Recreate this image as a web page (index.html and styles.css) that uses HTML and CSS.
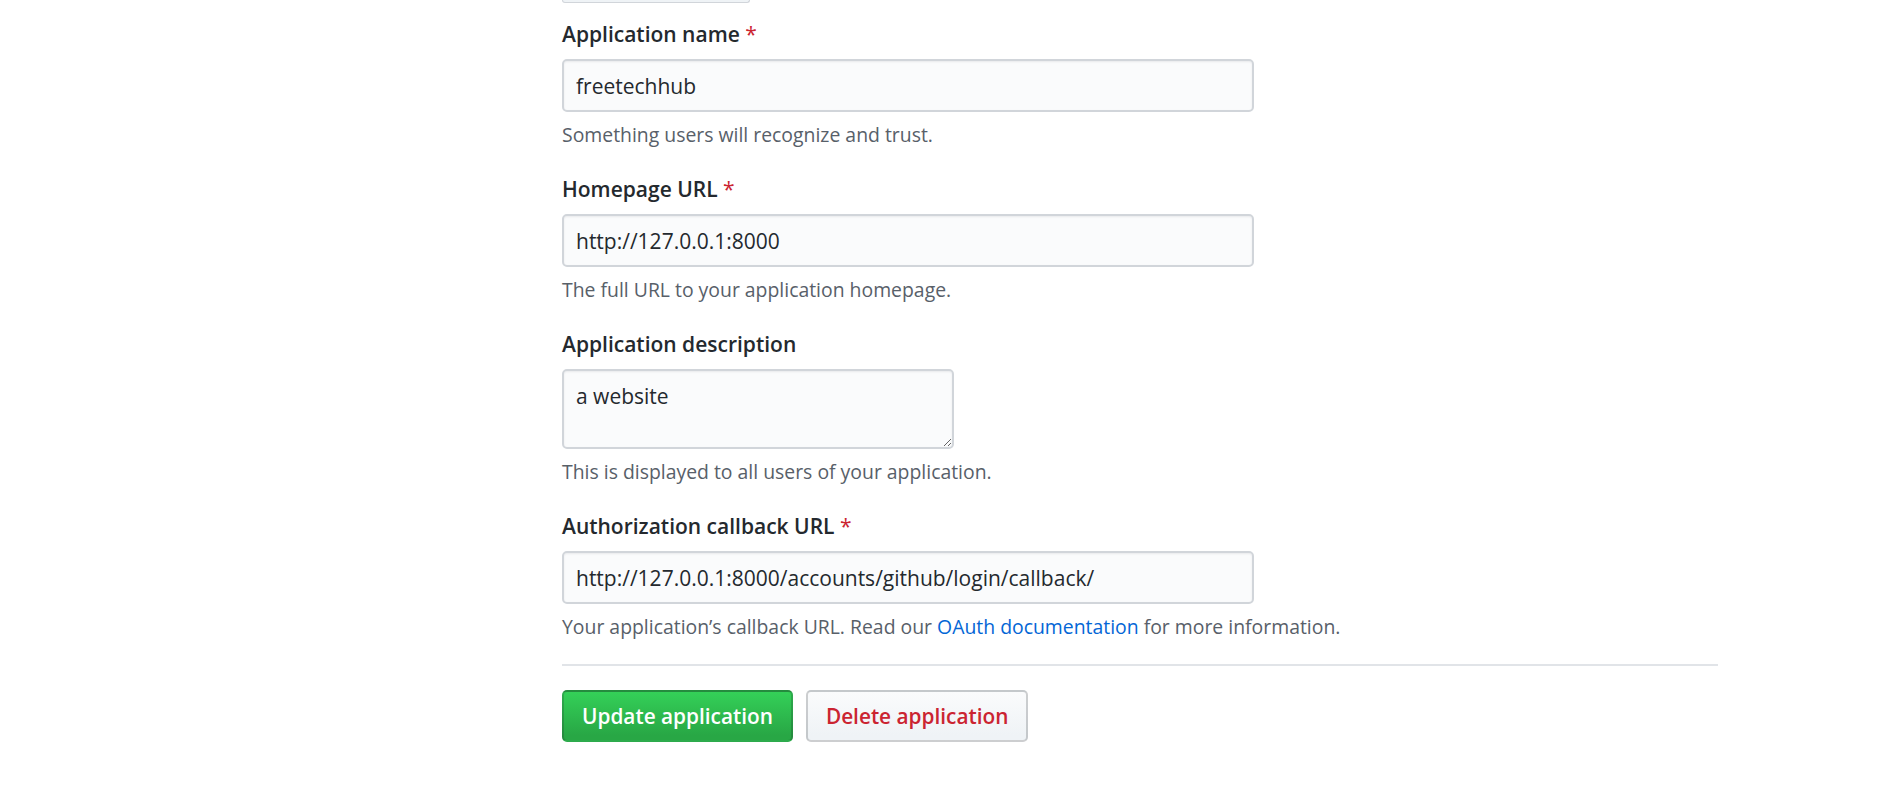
FILE: index.html
```html
<!DOCTYPE html>
<html lang="en">
<head>
<meta charset="utf-8">
<title>Edit OAuth application</title>
<link rel="stylesheet" href="styles.css">
</head>
<body>
<div class="layout">
  <div class="sidebar"></div>
  <main class="main">
    <div class="prev-box"></div>
    <form class="app-form">
      <div class="group">
        <label class="label">Application name <span class="req">*</span></label>
        <input class="input" type="text" value="freetechhub">
        <p class="note">Something users will recognize and trust.</p>
      </div>
      <div class="group">
        <label class="label">Homepage URL <span class="req">*</span></label>
        <input class="input" type="text" value="http://127.0.0.1:8000">
        <p class="note">The full URL to your application homepage.</p>
      </div>
      <div class="group">
        <label class="label">Application description</label>
        <textarea class="input textarea">a website</textarea>
        <p class="note">This is displayed to all users of your application.</p>
      </div>
      <div class="group">
        <label class="label">Authorization callback URL <span class="req">*</span></label>
        <input class="input" type="text" value="http://127.0.0.1:8000/accounts/github/login/callback/">
        <p class="note">Your application’s callback URL. Read our <a class="link" href="#">OAuth documentation</a> for more information.</p>
      </div>
      <hr class="divider">
      <div class="actions">
        <button type="button" class="btn btn-primary">Update application</button>
        <button type="button" class="btn btn-danger">Delete application</button>
      </div>
    </form>
  </main>
</div>
</body>
</html>
```

FILE: styles.css
```css
html, body {
  margin: 0;
  padding: 0;
  background: #ffffff;
}

body {
  font-family: "Open Sans", "Noto Sans", sans-serif;
  color: #24292e;
}

.layout {
  display: flex;
}

.sidebar {
  flex: none;
  width: 562px;
}

.main {
  flex: none;
  width: 1156px;
}

.prev-box {
  width: 188px;
  height: 3px;
  box-sizing: border-box;
  border: 1px solid #d1d5da;
  border-top: none;
  border-radius: 0 0 5px 5px;
  background: #eff3f6;
}

.app-form {
  margin: 0;
  display: flex;
  flex-direction: column;
}

.group {
  display: flex;
  flex-direction: column;
  align-items: flex-start;
  margin-top: 26px;
}

.group:first-child {
  margin-top: 16px;
}

.label {
  display: block;
  font-size: 21px;
  font-weight: 600;
  line-height: 30px;
  color: #24292e;
}

.req {
  color: #cb2431;
  font-weight: 400;
}

.input {
  display: block;
  margin-top: 10px;
  width: 692px;
  height: 53px;
  box-sizing: border-box;
  padding: 0 12px;
  font-family: inherit;
  font-size: 21px;
  color: #24292e;
  background: #fafbfc;
  border: 2px solid #d1d5da;
  border-radius: 5px;
  box-shadow: inset 0 1px 2px rgba(27, 31, 35, 0.075);
  outline: none;
}

.textarea {
  width: 392px;
  height: 80px;
  padding: 10px 12px;
  line-height: 1.5;
  resize: vertical;
}

.note {
  margin: 9px 0 0;
  font-size: 19.4px;
  line-height: 27px;
  color: #586069;
}

.link {
  color: #0366d6;
  text-decoration: none;
}

.divider {
  margin: 24px 0 0;
  height: 0;
  border: 0;
  border-top: 2px solid #e1e4e8;
}

.actions {
  display: flex;
  gap: 13px;
  margin-top: 24px;
}

.btn {
  height: 52px;
  padding: 0 18px;
  box-sizing: border-box;
  font-family: inherit;
  font-size: 20.8px;
  font-weight: 600;
  border: 2px solid rgba(27, 31, 35, 0.2);
  border-radius: 5px;
  cursor: pointer;
}

.btn-primary {
  color: #ffffff;
  background-image: linear-gradient(-180deg, #34d058 0%, #28a745 90%);
}

.btn-danger {
  color: #cb2431;
  background-image: linear-gradient(-180deg, #fafbfc 0%, #eff3f6 90%);
}
```
